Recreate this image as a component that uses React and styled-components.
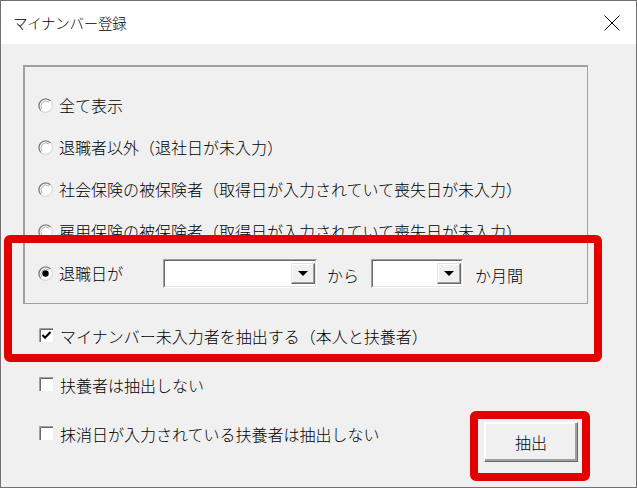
import React from 'react'
import styled, { createGlobalStyle } from 'styled-components'

const Global = createGlobalStyle`
  html, body {
    margin: 0;
    padding: 0;
    background: #ffffff;
  }
  body {
    font-family: "Noto Sans CJK JP", "Noto Sans", sans-serif;
    font-weight: 300;
    color: #000;
  }
`

const Window = styled.div`
  position: relative;
  width: 637px;
  height: 488px;
  box-sizing: border-box;
  border: 1px solid #707070;
  display: flex;
  flex-direction: column;
  background: #f0f0f0;
  overflow: hidden;
`

const TitleBar = styled.div`
  height: 43px;
  flex: none;
  background: #fff;
  display: flex;
  align-items: center;
  padding-left: 12px;
  font-size: 14.5px;
  letter-spacing: -0.3px;
`

const CloseBox = styled.div`
  margin-left: auto;
  width: 46px;
  height: 43px;
  margin-right: 1px;
  display: flex;
  align-items: center;
  justify-content: center;
`

const Body = styled.div`
  flex: 1;
  padding: 21px 48px 0 22px;
  font-size: 16px;
`

const Frame = styled.div`
  box-sizing: border-box;
  height: 239px;
  border-style: solid;
  border-color: #a0a0a0;
  border-width: 2px 1px 1px 2px;
  padding: 17px 0 0 13px;
`

const Row = styled.div`
  height: ${p => p.h || 42}px;
  display: flex;
  align-items: center;
  gap: 6px;
  white-space: nowrap;
`

const Label = styled.span`
  display: inline-block;
  min-width: ${p => p.w || 0}px;
  line-height: 1;
`

const Lower = styled.div`
  display: grid;
  grid-template-columns: 1fr auto;
  padding: 7px 0 0 16px;
`

const Checks = styled.div`
  display: flex;
  flex-direction: column;
`

const Combo = styled.div`
  box-sizing: border-box;
  width: ${p => p.w}px;
  height: 29px;
  border: 1px solid;
  border-color: #a0a0a0 #ffffff #ffffff #a0a0a0;
  display: flex;
`

const ComboInner = styled.div`
  flex: 1;
  display: flex;
  justify-content: flex-end;
  align-items: center;
  background: #fff;
  border: 1px solid;
  border-color: #696969 #e3e3e3 #e3e3e3 #696969;
`

const DropButton = styled.div`
  box-sizing: border-box;
  width: 24px;
  height: 21px;
  background: #f0f0f0;
  border: 1px solid;
  border-color: #e3e3e3 #696969 #696969 #e3e3e3;
  box-shadow: inset -1px -1px 0 #a0a0a0, inset 1px 1px 0 #fff;
  display: flex;
  align-items: center;
  justify-content: center;

  &::after {
    content: '';
    width: 0;
    height: 0;
    border-left: 5px solid transparent;
    border-right: 5px solid transparent;
    border-top: 5px solid #000;
  }
`

const Joiner = styled.span`
  margin: 0 ${p => p.r || 0}px 0 ${p => p.l || 0}px;
  line-height: 1;
  padding-top: 3px;
`

const ActionButton = styled.button`
  box-sizing: border-box;
  width: 94px;
  height: 40px;
  margin: 111px 10px 0 0;
  align-self: start;
  font-family: inherit;
  font-weight: 300;
  font-size: 16px;
  color: #000;
  background: #f0f0f0;
  border: 1px solid;
  border-color: #ffffff #696969 #696969 #ffffff;
  box-shadow: inset -2px -2px 0 #a0a0a0, inset 1px 1px 0 #fff;
  padding: 0;
`

const Highlight = styled.div`
  position: absolute;
  box-sizing: border-box;
  left: ${p => p.x}px;
  top: ${p => p.y}px;
  width: ${p => p.w}px;
  height: ${p => p.h}px;
  border: 8px solid #e30000;
  border-radius: 6px;
  pointer-events: none;
`

const Radio = ({ checked }) => (
  <svg width="15" height="15" viewBox="0 0 15 15">
    <circle cx="7.5" cy="7.5" r="6.8" fill="#fff" stroke="#d8d8d8" strokeWidth="1.2" />
    <path d="M2.7 12.3 A6.8 6.8 0 0 1 12.3 2.7" fill="none" stroke="#7a7a7a" strokeWidth="1.2" />
    <path d="M4 11 A5 5 0 0 1 11 4" fill="none" stroke="#b0b0b0" />
    {checked && <circle cx="7.5" cy="7.5" r="3.2" fill="#000" />}
  </svg>
)

const Check = ({ checked }) => (
  <svg width="15" height="15" viewBox="0 0 15 15">
    <rect x="0" y="0" width="15" height="15" fill="#fff" />
    <path d="M0.5 15 V0.5 H15" fill="none" stroke="#a0a0a0" />
    <path d="M1.5 14 V1.5 H14" fill="none" stroke="#696969" />
    <path d="M14.5 0 V14.5 H0" fill="none" stroke="#f0f0f0" />
    {checked && (
      <path d="M3.5 7 L6 9.8 L11.5 4" fill="none" stroke="#000" strokeWidth="2" />
    )}
  </svg>
)

const radios = [
  '全て表示',
  '退職者以外（退社日が未入力）',
  '社会保険の被保険者（取得日が入力されていて喪失日が未入力）',
  '雇用保険の被保険者（取得日が入力されていて喪失日が未入力）',
]

const checks = [
  { text: 'マイナンバー未入力者を抽出する（本人と扶養者）', on: true },
  { text: '扶養者は抽出しない', on: false },
  { text: '抹消日が入力されている扶養者は抽出しない', on: false },
]

export default function App() {
  return (
    <>
      <Global />
      <Window>
        <TitleBar>
          マイナンバー登録
          <CloseBox>
            <svg width="16" height="16" viewBox="0 0 16 16">
              <path d="M0.5 0.5 L15.5 15.5 M15.5 0.5 L0.5 15.5" stroke="#000" strokeWidth="1" />
            </svg>
          </CloseBox>
        </TitleBar>
        <Body>
          <Frame>
            {radios.map(t => (
              <Row key={t}>
                <Radio />
                <Label>{t}</Label>
              </Row>
            ))}
            <Row>
              <Radio checked />
              <Label w={98}>退職日が</Label>
              <Combo w={154}>
                <ComboInner>
                  <DropButton />
                </ComboInner>
              </Combo>
              <Joiner l={4} r={6}>から</Joiner>
              <Combo w={92}>
                <ComboInner>
                  <DropButton />
                </ComboInner>
              </Combo>
              <Joiner l={6}>か月間</Joiner>
            </Row>
          </Frame>
          <Lower>
            <Checks>
              {checks.map(c => (
                <Row key={c.text} h={49}>
                  <Check checked={c.on} />
                  <Label>{c.text}</Label>
                </Row>
              ))}
            </Checks>
            <ActionButton>抽出</ActionButton>
          </Lower>
        </Body>
        <Highlight x={3} y={234} w={598} h={127} />
        <Highlight x={469} y={410} w={120} h={70} />
      </Window>
    </>
  )
}
